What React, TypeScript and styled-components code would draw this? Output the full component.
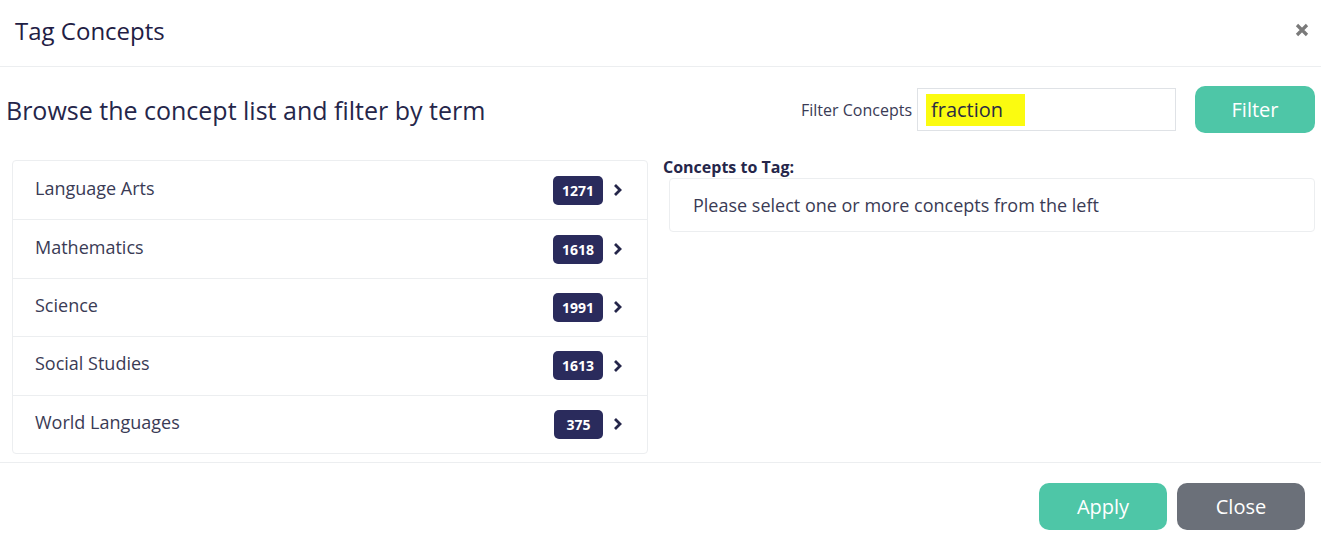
import styled, { createGlobalStyle } from 'styled-components'

const GlobalStyle = createGlobalStyle`
  html, body {
    margin: 0;
    padding: 0;
    background: #ffffff;
  }
  body {
    font-family: 'Open Sans', 'Liberation Sans', sans-serif;
    color: #25264a;
  }
  * {
    box-sizing: border-box;
  }
`

type Subject = {
  name: string
  count: number
}

const subjects: Subject[] = [
  { name: 'Language Arts', count: 1271 },
  { name: 'Mathematics', count: 1618 },
  { name: 'Science', count: 1991 },
  { name: 'Social Studies', count: 1613 },
  { name: 'World Languages', count: 375 },
]

const Modal = styled.div`
  width: 1321px;
  height: 544px;
  display: flex;
  flex-direction: column;
  background: #fff;
`

const ModalHeader = styled.header`
  height: 67px;
  display: flex;
  align-items: center;
  justify-content: space-between;
  padding: 0 12px 6px 15px;
  border-bottom: 1px solid #eceef0;
`

const ModalTitle = styled.h1`
  margin: 0;
  font-size: 24px;
  font-weight: 400;
  color: #1f2044;
`

const CloseIcon = styled.button`
  border: none;
  background: none;
  padding: 0;
  width: 14px;
  height: 14px;
  display: flex;
  cursor: pointer;
`

const ModalBody = styled.div`
  flex: 1;
  padding: 19px 6px 0;
  border-bottom: 1px solid #eceef0;
`

const TopRow = styled.div`
  display: flex;
  align-items: center;
  height: 47px;
`

const Lead = styled.h2`
  margin: 0;
  flex: 1;
  font-size: 25px;
  font-weight: 400;
  color: #25264a;
`

const FilterLabel = styled.label`
  font-size: 16px;
  color: #3a3b55;
  margin-right: 5px;
`

const FilterInput = styled.div`
  width: 259px;
  height: 43px;
  border: 1px solid #dfe2e6;
  padding: 2px 8px;
  display: flex;
  align-items: center;
  font-size: 20px;
  color: #2a2b44;
  margin-right: 19px;
`

const Highlight = styled.span`
  background: #fbfb10;
  height: 32px;
  display: flex;
  align-items: center;
  padding: 0 22px 0 5px;
`

const Button = styled.button<{ $tone: 'teal' | 'gray' }>`
  width: 128px;
  height: 47px;
  border: none;
  border-radius: 10px;
  background: ${(p) => (p.$tone === 'teal' ? '#4ec6a7' : '#6b7079')};
  color: #fff;
  font: inherit;
  font-size: 20px;
  cursor: pointer;
`

const FilterButton = styled(Button)`
  width: 120px;
`

const Columns = styled.div`
  display: grid;
  grid-template-columns: 636px 1fr;
  column-gap: 15px;
  margin-top: 27px;
  padding-left: 6px;
`

const SubjectList = styled.ul`
  list-style: none;
  margin: 0;
  padding: 0;
  border: 1px solid #eceef0;
  border-radius: 4px;
`

const SubjectRow = styled.li`
  height: 58.4px;
  display: flex;
  align-items: center;
  padding: 0 24px 0 22px;
  font-size: 18px;
  color: #3a3b55;
  & + & {
    border-top: 1px solid #eceef0;
  }
`

const SubjectName = styled.span`
  flex: 1;
  margin-bottom: 5px;
`

const CountBadge = styled.span`
  min-width: 49px;
  height: 29px;
  padding: 0 9px;
  display: inline-flex;
  align-items: center;
  justify-content: center;
  border-radius: 5px;
  background: #2a2b5c;
  color: #fff;
  font-size: 14px;
  font-weight: 700;
  margin-right: 10px;
`

const TagColumn = styled.div`
  display: flex;
  flex-direction: column;
`

const TagHeading = styled.div`
  font-size: 16px;
  font-weight: 700;
  color: #25264a;
  line-height: 14px;
  margin-bottom: 4px;
`

const TagBox = styled.div`
  margin-left: 6px;
  height: 54px;
  border: 1px solid #eceef0;
  border-radius: 4px;
  display: flex;
  align-items: center;
  padding: 0 0 1px 23px;
  font-size: 18px;
  color: #3a3b55;
`

const ModalFooter = styled.footer`
  height: 81px;
  display: flex;
  justify-content: flex-end;
  align-items: flex-start;
  gap: 10px;
  padding: 20px 16px 0 0;
`

function Chevron() {
  return (
    <svg width="10" height="14" viewBox="0 0 10 14">
      <path d="M2 2l5 5-5 5" fill="none" stroke="#25264a" strokeWidth="2.8" />
    </svg>
  )
}

export default function App() {
  return (
    <>
      <GlobalStyle />
      <Modal>
        <ModalHeader>
          <ModalTitle>Tag Concepts</ModalTitle>
          <CloseIcon aria-label="Close">
            <svg width="14" height="14" viewBox="0 0 14 14">
              <path d="M2 2l10 10M12 2L2 12" stroke="#7a7a7a" strokeWidth="3.2" />
            </svg>
          </CloseIcon>
        </ModalHeader>

        <ModalBody>
          <TopRow>
            <Lead>Browse the concept list and filter by term</Lead>
            <FilterLabel>Filter Concepts</FilterLabel>
            <FilterInput>
              <Highlight>fraction</Highlight>
            </FilterInput>
            <FilterButton $tone="teal">Filter</FilterButton>
          </TopRow>

          <Columns>
            <SubjectList>
              {subjects.map((subject) => (
                <SubjectRow key={subject.name}>
                  <SubjectName>{subject.name}</SubjectName>
                  <CountBadge>{subject.count}</CountBadge>
                  <Chevron />
                </SubjectRow>
              ))}
            </SubjectList>

            <TagColumn>
              <TagHeading>Concepts to Tag:</TagHeading>
              <TagBox>Please select one or more concepts from the left</TagBox>
            </TagColumn>
          </Columns>
        </ModalBody>

        <ModalFooter>
          <Button $tone="teal">Apply</Button>
          <Button $tone="gray">Close</Button>
        </ModalFooter>
      </Modal>
    </>
  )
}
